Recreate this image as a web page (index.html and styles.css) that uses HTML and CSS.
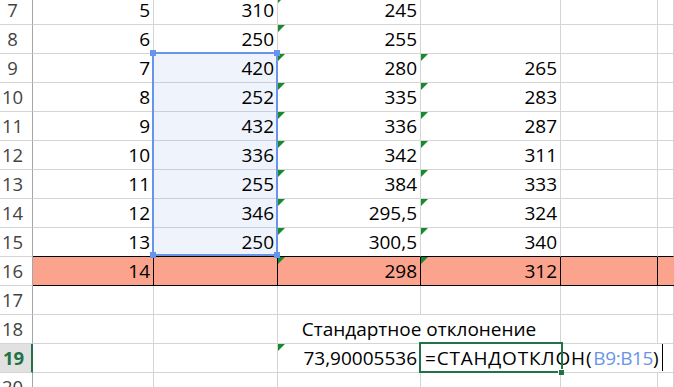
FILE: index.html
```html
<!DOCTYPE html>
<html lang="ru">
<head>
<meta charset="utf-8">
<title>Лист</title>
<link rel="stylesheet" href="styles.css">
</head>
<body>
<div class="sheet">
  <div class="hd">7</div><div class="c">5</div><div class="c">310</div><div class="c tri">245</div><div class="c"></div><div class="c"></div><div class="c"></div>
  <div class="hd">8</div><div class="c">6</div><div class="c">250</div><div class="c tri">255</div><div class="c"></div><div class="c"></div><div class="c"></div>
  <div class="hd">9</div><div class="c">7</div><div class="c sel">420</div><div class="c tri">280</div><div class="c tri">265</div><div class="c"></div><div class="c"></div>
  <div class="hd">10</div><div class="c">8</div><div class="c sel">252</div><div class="c tri">335</div><div class="c tri">283</div><div class="c"></div><div class="c"></div>
  <div class="hd">11</div><div class="c">9</div><div class="c sel">432</div><div class="c tri">336</div><div class="c tri">287</div><div class="c"></div><div class="c"></div>
  <div class="hd">12</div><div class="c">10</div><div class="c sel">336</div><div class="c tri">342</div><div class="c tri">311</div><div class="c"></div><div class="c"></div>
  <div class="hd">13</div><div class="c">11</div><div class="c sel">255</div><div class="c tri">384</div><div class="c tri">333</div><div class="c"></div><div class="c"></div>
  <div class="hd">14</div><div class="c">12</div><div class="c sel">346</div><div class="c tri">295,5</div><div class="c tri">324</div><div class="c"></div><div class="c"></div>
  <div class="hd">15</div><div class="c bk">13</div><div class="c sel bk">250</div><div class="c tri bk">300,5</div><div class="c tri bk">340</div><div class="c bk"></div><div class="c bk"></div>
  <div class="hd">16</div><div class="c hl">14</div><div class="c hl"></div><div class="c hl tri">298</div><div class="c hl tri">312</div><div class="c hl"></div><div class="c hl last"></div>
  <div class="hd">17</div><div class="c"></div><div class="c"></div><div class="c"></div><div class="c"></div><div class="c"></div><div class="c"></div>
  <div class="hd">18</div><div class="c"></div><div class="c"></div><div class="c span2 center">Стандартное отклонение</div><div class="c"></div><div class="c"></div>
  <div class="hd active">19</div><div class="c"></div><div class="c"></div><div class="c tri">73,90005536</div><div class="c span2 formula"><span class="fn">=СТАНДОТКЛОН(</span><span class="ref">B9:B15</span>)<span class="caret"></span></div><div class="c"></div>
  <div class="hd">20</div><div class="c"></div><div class="c"></div><div class="c"></div><div class="c"></div><div class="c"></div><div class="c"></div>

  <div class="selbox">
    <span class="h tl"></span><span class="h tr"></span><span class="h bl"></span><span class="h br"></span>
  </div>
  <div class="activebox"><span class="fill"></span></div>
</div>
</body>
</html>
```

FILE: styles.css
```css
html, body {
  margin: 0;
  padding: 0;
  background: #ffffff;
  overflow: hidden;
}

.sheet {
  position: relative;
  display: grid;
  grid-template-columns: 33px 121px 124px 143px 140px 97px 1fr;
  grid-auto-rows: 29px;
  margin-top: -4px;
  font-family: "Open Sans", "Liberation Sans", sans-serif;
  font-size: 19px;
  line-height: 28px;
  color: #000;
}

.hd {
  box-sizing: border-box;
  border-right: 1px solid #a6a6a6;
  border-bottom: 1px solid #d4d4d4;
  text-align: center;
  padding-right: 7px;
  font-size: 18.5px;
  color: #444;
}

.hd.active {
  background: #e1e1e1;
  color: #217346;
  font-weight: 700;
  border-right: 2px solid #217346;
  padding-right: 4px;
}

.c {
  position: relative;
  box-sizing: border-box;
  border-right: 1px solid #d4d4d4;
  border-bottom: 1px solid #d4d4d4;
  text-align: right;
  padding-right: 3px;
  white-space: nowrap;
}

.c.sel {
  background: #eef3fc;
  border-bottom-color: #c9ced9;
}

.c.bk {
  border-bottom-color: #000;
}

.c.hl {
  background: #fba38c;
  border-right-color: #000;
  border-bottom-color: #000;
}

.c.hl.last {
  border-right: none;
}

.span2 {
  grid-column: span 2;
}

.center {
  text-align: center;
  padding-right: 0;
}

.formula {
  text-align: left;
  padding-left: 4px;
  border-right: none;
}

.fn {
  letter-spacing: 0.8px;
}

.ref {
  color: #6a95e6;
  letter-spacing: -0.4px;
  margin-left: 1px;
}

.caret {
  display: inline-block;
  width: 1px;
  height: 27px;
  background: #000;
  margin-left: 3px;
  vertical-align: -6px;
}

.tri::before {
  content: "";
  position: absolute;
  top: 0;
  left: 0;
  border-top: 7px solid #168a2c;
  border-right: 7px solid transparent;
}

.selbox {
  position: absolute;
  left: 152px;
  top: 56px;
  width: 126px;
  height: 204px;
  box-sizing: border-box;
  border: 2px solid #6894ea;
  pointer-events: none;
}

.h {
  position: absolute;
  width: 6px;
  height: 6px;
  background: #6894ea;
}
.h.tl { left: -4px; top: -4px; }
.h.tr { right: -4px; top: -4px; }
.h.bl { left: -4px; bottom: -4px; }
.h.br { right: -4px; bottom: -4px; }

.activebox {
  position: absolute;
  left: 419px;
  top: 346px;
  width: 144px;
  height: 31px;
  box-sizing: border-box;
  border: 2px solid #217346;
  pointer-events: none;
}

.fill {
  position: absolute;
  right: -3px;
  bottom: -4px;
  width: 5px;
  height: 5px;
  background: #217346;
  border-left: 1px solid #fff;
  border-top: 1px solid #fff;
}
```
